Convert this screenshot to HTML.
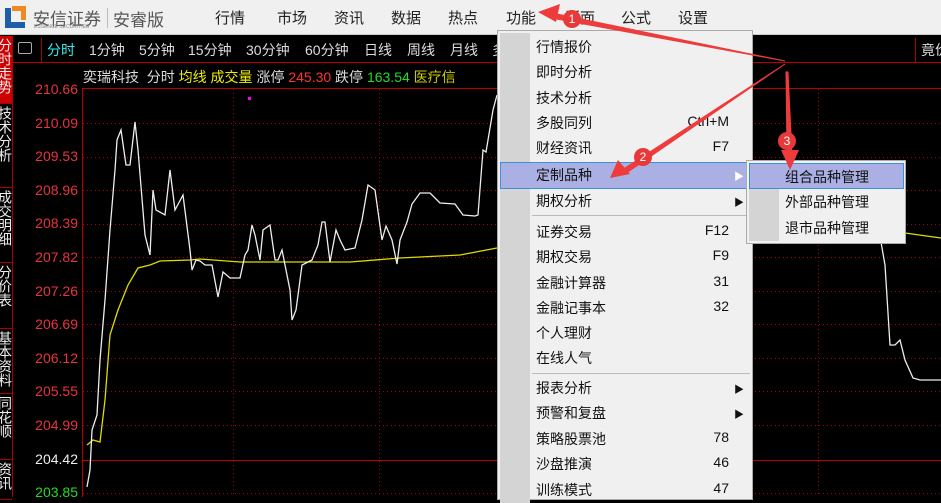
<!DOCTYPE html>
<html><head><meta charset="utf-8"><style>
*{margin:0;padding:0;box-sizing:border-box}
body{width:941px;height:497px;overflow:hidden;background:#000;font-family:"Liberation Sans","Noto Sans CJK SC",sans-serif;position:relative}
.abs{position:absolute;white-space:nowrap}
#top{position:absolute;left:0;top:0;width:941px;height:35px;background:#f0f0f0;border-bottom:1px solid #ccc}
.tm{position:absolute;top:7px;font-size:15px;color:#222}
.tb{position:absolute;top:40px;font-size:14px;color:#ddd;white-space:nowrap}
.pl{position:absolute;left:30px;font-size:14px;color:#e8343c;width:48px;text-align:right}
.side{position:absolute;left:0;width:12px;overflow:hidden;border-bottom:1px solid #a00}
.side span{display:block;writing-mode:vertical-rl;font-size:14px;color:#eee;margin-left:-5px;margin-top:2px}
#menu{position:absolute;left:497px;top:30px;width:256px;height:470px;background:#f0f0f0;border:1px solid #aaa}
#menu .g{position:absolute;left:2px;top:2px;width:30px;height:470px;background:#d4d4d4}
.mi{position:absolute;left:38px;font-size:14px;color:#111;width:215px;height:20px}
.mi b{font-weight:normal;position:absolute;right:22px;top:0}
.mi i{font-style:normal;position:absolute;right:7px;font-size:10px;top:3px}
.sep{position:absolute;left:34px;width:218px;height:1px;background:#bbb}
#sub{position:absolute;left:746px;top:160px;width:160px;height:84px;background:#f0f0f0;border:1px solid #aaa}
</style></head><body>
<div id="top">
  <div class="abs" style="left:5px;top:8px;width:20px;height:20px;border-left:6px solid #1e5ea8;border-bottom:6px solid #1e5ea8"></div>
  <div class="abs" style="left:12px;top:6px;width:14px;height:14px;border-top:5px solid #f08a1e;border-right:5px solid #f08a1e"></div>
  <div class="abs" style="left:33px;top:5px;font-size:17px;color:#555">安信证券</div>
  <div class="abs" style="left:34px;top:24px;font-size:5px;color:#888">ESSENCE SECURITIES</div>
  <div class="abs" style="left:107px;top:8px;width:1px;height:20px;background:#bbb"></div>
  <div class="abs" style="left:113px;top:6px;font-size:17px;color:#555">安睿版</div>
  <div class="tm" style="left:215px">行情</div><div class="tm" style="left:277px">市场</div>
  <div class="tm" style="left:334px">资讯</div><div class="tm" style="left:391px">数据</div>
  <div class="tm" style="left:448px">热点</div><div class="tm" style="left:506px">功能</div>
  <div class="tm" style="left:565px">版面</div><div class="tm" style="left:621px">公式</div>
  <div class="tm" style="left:678px">设置</div>
</div>
<div class="side" style="top:36px;height:68px;background:#c00"><span>分时走势</span></div>
<div class="side" style="top:104px;height:84px;background:#000"><span>技术分析</span></div>
<div class="side" style="top:188px;height:75px"><span>成交明细</span></div>
<div class="side" style="top:263px;height:66px"><span>分价表</span></div>
<div class="side" style="top:329px;height:65px"><span>基本资料</span></div>
<div class="side" style="top:394px;height:66px"><span>同花顺</span></div>
<div class="side" style="top:460px;height:40px"><span>资讯</span></div>
<div class="abs" style="left:12px;top:36px;width:1px;height:461px;background:#a00"></div>
<div class="abs" style="left:18px;top:42px;width:14px;height:12px;border:1px solid #aaa;border-radius:2px"></div>
<div class="abs" style="left:41px;top:38px;width:1px;height:24px;background:#a00"></div>
<div class="tb" style="left:47px;color:#3ee">分时</div>
<div class="tb" style="left:89px">1分钟</div><div class="tb" style="left:139px">5分钟</div>
<div class="tb" style="left:188px">15分钟</div><div class="tb" style="left:246px">30分钟</div>
<div class="tb" style="left:305px">60分钟</div><div class="tb" style="left:364px">日线</div>
<div class="tb" style="left:407px">周线</div><div class="tb" style="left:450px">月线</div>
<div class="tb" style="left:492px">多</div>
<div class="abs" style="left:915px;top:38px;width:1px;height:24px;background:#a00"></div>
<div class="abs" style="left:916px;top:36px;width:25px;height:26px;overflow:hidden"><div class="tb" style="left:5px;top:4px">竟价</div></div>
<div class="abs" style="left:13px;top:62px;width:928px;height:1px;background:#b00"></div>
<div class="abs" style="left:83px;top:67px;font-size:14px;color:#ddd">奕瑞科技 &nbsp;分时 <span style="color:#ee0">均线 成交量</span> 涨停 <span style="color:#f33">245.30</span> 跌停 <span style="color:#2d2">163.54</span> <span style="color:#cc0">医疗信</span></div>
<div class="abs" style="left:82px;top:88px;width:859px;height:1px;background:#b00"></div>
<div class="abs" style="left:82px;top:88px;width:1px;height:409px;background:#b00"></div>
<div class="abs" style="left:82px;top:460px;width:859px;height:1px;background:#b00"></div>
<div class="pl" style="top:81px">210.66</div><div class="pl" style="top:115px">210.09</div>
<div class="pl" style="top:148px">209.53</div><div class="pl" style="top:182px">208.96</div>
<div class="pl" style="top:215px">208.39</div><div class="pl" style="top:249px">207.82</div>
<div class="pl" style="top:283px">207.26</div><div class="pl" style="top:316px">206.69</div>
<div class="pl" style="top:350px">206.12</div><div class="pl" style="top:383px">205.55</div>
<div class="pl" style="top:417px">204.99</div><div class="pl" style="top:451px;color:#eee">204.42</div>
<div class="pl" style="top:484px;color:#2d2">203.85</div>
<svg class="abs" style="left:0;top:0" width="941" height="497">
<g stroke="#a00" stroke-dasharray="1,3" stroke-width="1">
<line x1="83" y1="123.5" x2="941" y2="123.5"/><line x1="83" y1="157.5" x2="941" y2="157.5"/>
<line x1="83" y1="190.5" x2="941" y2="190.5"/><line x1="83" y1="224.5" x2="941" y2="224.5"/>
<line x1="83" y1="257.5" x2="941" y2="257.5"/><line x1="83" y1="291.5" x2="941" y2="291.5"/>
<line x1="83" y1="324.5" x2="941" y2="324.5"/><line x1="83" y1="358.5" x2="941" y2="358.5"/>
<line x1="83" y1="391.5" x2="941" y2="391.5"/><line x1="83" y1="425.5" x2="941" y2="425.5"/>
<line x1="83" y1="493.5" x2="941" y2="493.5"/>
<line x1="233.5" y1="89" x2="233.5" y2="497"/><line x1="379.5" y1="89" x2="379.5" y2="497"/>
<line x1="818.5" y1="89" x2="818.5" y2="497"/>
</g>
<rect x="248" y="97" width="3" height="3" fill="#f0f"/>
<polyline fill="none" stroke="#dd0" stroke-width="1.3" points="87,445 93,440 100,442 105,400 110,335 118,310 128,285 138,268 150,265 160,261 190,260 200,259 240,262 300,262 350,262 400,258 460,255 497,248"/>
<polyline fill="none" stroke="#dd0" stroke-width="1.3" points="750,229 800,230 905,233 941,238"/>
<polyline fill="none" stroke="#eee" stroke-width="1.3" points="87,487 90,470 92,430 97,415 100,360 105,300 110,230 115,170 117,140 121,130 126,165 130,165 135,122 138,150 145,235 150,255 153,190 156,210 165,215 170,170 175,210 183,195 190,250 192,270 196,260 200,261 205,265 212,265 218,297 223,272 230,278 240,278 245,255 248,250 252,225 255,235 260,260 263,230 270,225 275,260 278,260 282,250 290,290 292,320 296,310 302,265 308,262 312,260 318,245 322,222 325,222 330,262 336,230 340,240 345,250 355,248 362,220 368,185 375,190 382,240 386,226 392,240 397,264 400,240 407,222 412,204 420,193 430,193 440,203 455,204 463,215 475,216 478,215 483,150 486,152 493,110 497,95"/>
<polyline fill="none" stroke="#eee" stroke-width="1.3" points="878,225 885,265 890,345 895,345 900,340 905,360 913,378 920,380 941,380"/>
</svg>
<div id="menu"><div class="g"></div>
<div class="abs" style="left:2px;top:131px;width:252px;height:27px;background:#aab0e4;border:1px solid #3d8fd8"></div>
<div class="mi" style="top:6px">行情报价</div>
<div class="mi" style="top:31px">即时分析</div>
<div class="mi" style="top:57px">技术分析</div>
<div class="mi" style="top:82px">多股同列<b>Ctrl+M</b></div>
<div class="mi" style="top:107px">财经资讯<b>F7</b></div>
<div class="mi" style="top:134px">定制品种<i style="color:#fff">▶</i></div>
<div class="mi" style="top:160px">期权分析<i>▶</i></div>
<div class="sep" style="top:184px"></div>
<div class="mi" style="top:191px">证券交易<b>F12</b></div>
<div class="mi" style="top:216px">期权交易<b>F9</b></div>
<div class="mi" style="top:242px">金融计算器<b>31</b></div>
<div class="mi" style="top:267px">金融记事本<b>32</b></div>
<div class="mi" style="top:292px">个人理财</div>
<div class="mi" style="top:317px">在线人气</div>
<div class="sep" style="top:342px"></div>
<div class="mi" style="top:347px">报表分析<i>▶</i></div>
<div class="mi" style="top:372px">预警和复盘<i>▶</i></div>
<div class="mi" style="top:398px">策略股票池<b>78</b></div>
<div class="mi" style="top:423px">沙盘推演<b>46</b></div>
<div class="mi" style="top:449px">训练模式<b>47</b></div>
</div>
<div id="sub">
<div class="abs" style="left:2px;top:2px;width:30px;height:78px;background:#d4d4d4"></div>
<div class="abs" style="left:2px;top:2px;width:155px;height:26px;background:#aab0e4;border:1px solid #3d8fd8"></div>
<div class="abs" style="left:38px;top:6px;font-size:14px;color:#111">组合品种管理</div>
<div class="abs" style="left:38px;top:31px;font-size:14px;color:#111">外部品种管理</div>
<div class="abs" style="left:38px;top:57px;font-size:14px;color:#111">退市品种管理</div>
</div>
<svg class="abs" style="left:0;top:0" width="941" height="497">
<g fill="#ee3b3b" stroke="#ee3b3b">
<polygon points="785,61 552,13 551,18" stroke-width="1"/>
<polygon points="538,12 560,4 556,22" stroke="none"/>
<polygon points="785,64 622,170 625,174" stroke-width="1"/>
<polygon points="610,178 618,160 630,174" stroke="none"/>
<polygon points="786,72 788,72 792,155 787,155" stroke-width="1"/>
<polygon points="790,170 781,150 799,150" stroke="none"/>
<circle cx="572" cy="19" r="9" stroke="none" fill="#e83838"/>
<circle cx="643" cy="157" r="9" stroke="none" fill="#e83838"/>
<circle cx="787" cy="141" r="9" stroke="none" fill="#e83838"/>
</g>
<g fill="#fff" font-size="12" font-family="Liberation Sans" text-anchor="middle">
<text x="572" y="23">1</text><text x="643" y="161">2</text><text x="787" y="145">3</text>
</g>
</svg>
</body></html>
